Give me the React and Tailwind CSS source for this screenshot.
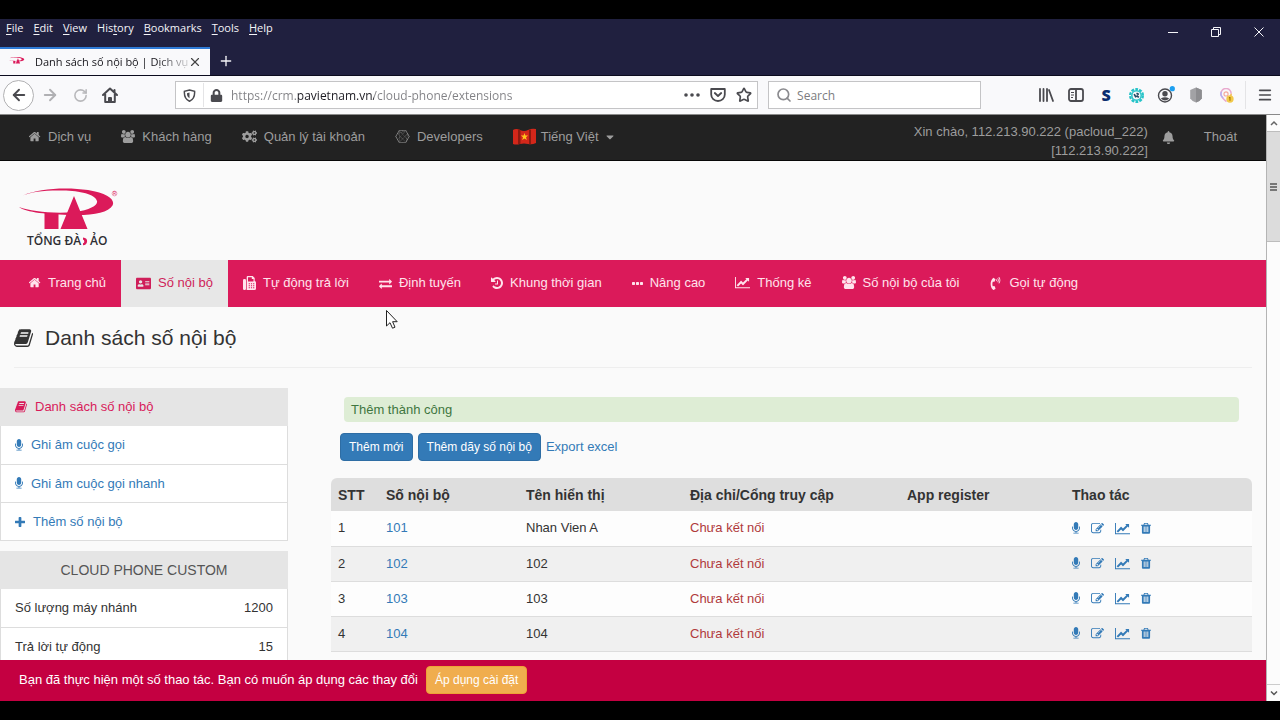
import { FaAddressCard, FaBell, FaCaretDown, FaCogs, FaConnectdevelop, FaLock, FaPhoneVolume } from "react-icons/fa";
import { ArrowLeft, ArrowRight, Menu, Plus, RotateCw, Search, Star, X } from "lucide-react";

const glyphs = {
  home: {
    box: "64 128 1664 1536",
    w: "w-3",
    d: "M1408 992v480q0 26-19 45t-45 19h-384v-384h-256v384h-384q-26 0-45-19t-19-45v-480q0-1 .5-3t.5-3l575-474 575 474q1 2 1 6zm223-69l-62 74q-8 9-21 11h-3q-13 0-21-7l-692-577-692 577q-12 8-24 7-13-2-21-11l-62-74q-8-10-7-23.5t11-21.5l719-599q32-26 76-26t76 26l244 204v-195q0-14 9-23t23-9h192q14 0 23 9t9 23v408l219 182q10 8 11 21.5t-7 23.5z",
  },
  users: {
    box: "0 0 1920 1792",
    w: "w-[14px]",
    d: "M593 896q-162 5-265 128h-134q-82 0-138-40.5t-56-118.5q0-353 124-353 6 0 43.5 21t97.5 42.5 119 21.5q67 0 133-23-5 37-5 66 0 139 81 256zm1071 637q0 120-73 189.5t-194 69.5h-874q-121 0-194-69.5t-73-189.5q0-53 3.5-103.5t14-109 26.5-108.5 43-97.5 62-81 85.5-53.5 111.5-20q10 0 43 21.5t73 48 107 48 135 21.5 135-21.5 107-48 73-48 43-21.5q61 0 111.5 20t85.5 53.5 62 81 43 97.5 26.5 108.5 14 109 3.5 103.5zm-1024-1277q0 106-75 181t-181 75-181-75-75-181 75-181 181-75 181 75 75 181zm704 384q0 159-112.5 271.5t-271.5 112.5-271.5-112.5-112.5-271.5 112.5-271.5 271.5-112.5 271.5 112.5 112.5 271.5zm576 225q0 78-56 118.5t-138 40.5h-134q-103-123-265-128 81-117 81-256 0-29-5-66 66 23 133 23 59 0 119-21.5t97.5-42.5 43.5-21q124 0 124 353zm-128-609q0 106-75 181t-181 75-181-75-75-181 75-181 181-75 181 75 75 181z",
  },
  microphone: {
    box: "320 0 1152 1792",
    w: "w-2",
    d: "M1472 704v128q0 221-147.5 384.5t-364.5 187.5v132h256q26 0 45 19t19 45-19 45-45 19h-640q-26 0-45-19t-19-45 19-45 45-19h256v-132q-217-24-364.5-187.5t-147.5-384.5v-128q0-26 19-45t45-19 45 19 19 45v128q0 185 131.5 316.5t316.5 131.5 316.5-131.5 131.5-316.5v-128q0-26 19-45t45-19 45 19 19 45zm-256-384v512q0 132-94 226t-226 94-226-94-94-226v-512q0-132 94-226t226-94 226 94 94 226z",
  },
  edit: {
    box: "0 0 1792 1792",
    w: "w-[13px]",
    d: "M888 1184l116-116-152-152-116 116v56h96v96h56zm440-720q-16-16-33 1l-350 350q-17 17-1 33t33-1l350-350q17-17 1-33zm80 594v190q0 119-84.5 203.5t-203.5 84.5h-832q-119 0-203.5-84.5t-84.5-203.5v-832q0-119 84.5-203.5t203.5-84.5h832q63 0 117 25 15 7 18 23 3 17-9 29l-49 49q-14 14-32 8-23-6-45-6h-832q-66 0-113 47t-47 113v832q0 66 47 113t113 47h832q66 0 113-47t47-113v-126q0-13 9-22l64-64q15-15 35-7t20 29zm-96-738l288 288-672 672h-288v-288zm444 132l-92 92-288-288 92-92q28-28 68-28t68 28l152 152q28 28 28 68t-28 68z",
  },
  chart: {
    box: "0 0 2048 1792",
    w: "w-[15px]",
    d: "M2048 1536v128h-2048v-1536h128v1408h1920zm-128-1248v435q0 21-19.5 29.5t-35.5-7.5l-121-121-633 633q-10 10-23 10t-23-10l-233-233-416 416-192-192 585-585q10-10 23-10t23 10l233 233 464-464-121-121q-16-16-7.5-35.5t29.5-19.5h435q14 0 23 9t9 23z",
  },
  trash: {
    box: "192 0 1408 1792",
    w: "w-[10px]",
    d: "M704 1376v-704q0-14-9-23t-23-9h-64q-14 0-23 9t-9 23v704q0 14 9 23t23 9h64q14 0 23-9t9-23zm256 0v-704q0-14-9-23t-23-9h-64q-14 0-23 9t-9 23v704q0 14 9 23t23 9h64q14 0 23-9t9-23zm256 0v-704q0-14-9-23t-23-9h-64q-14 0-23 9t-9 23v704q0 14 9 23t23 9h64q14 0 23-9t9-23zm-544-992h448l-48-117q-7-9-17-11h-317q-10 2-17 11zm928 32v64q0 14-9 23t-23 9h-96v948q0 83-47 143.5t-113 60.5h-832q-66 0-113-58.5t-47-141.5v-952h-96q-14 0-23-9t-9-23v-64q0-14 9-23t23-9h309l70-167q15-37 54-63t79-26h320q40 0 79 26t54 63l70 167h309q14 0 23 9t9 23z",
  },
  exchange: {
    box: "0 0 1792 1792",
    w: "w-[13px]",
    d: "M1792 1184v192q0 13-9.5 22.5t-22.5 9.5h-1376v192q0 13-9.5 22.5t-22.5 9.5q-12 0-24-10l-319-320q-9-9-9-22 0-14 9-23l320-320q9-9 23-9 13 0 22.5 9.5t9.5 22.5v192h1376q13 0 22.5 9.5t9.5 22.5zm0-544q0 14-9 23l-320 320q-9 9-23 9-13 0-22.5-9.5t-9.5-22.5v-192h-1376q-13 0-22.5-9.5t-9.5-22.5v-192q0-13 9.5-22.5t22.5-9.5h1376v-192q0-14 9-23t23-9q12 0 24 10l319 319q9 9 9 23z",
  },
  history: {
    box: "128 0 1536 1792",
    w: "w-3",
    d: "M1664 896q0 156-61 298t-164 245-245 164-298 61q-172 0-327-72.5t-264-204.5q-7-10-6.5-22.5t8.5-20.5l137-138q10-9 25-9 16 2 23 12 73 95 179 147t225 52q104 0 198.5-40.5t163.5-109.5 109.5-163.5 40.5-198.5-40.5-198.5-109.5-163.5-163.5-109.5-198.5-40.5q-98 0-188 35.5t-160 101.5l137 138q31 30 14 69-17 40-59 40h-448q-26 0-45-19t-19-45v-448q0-42 40-59 39-17 69 14l130 129q107-101 244.5-156.5t284.5-55.5q156 0 298 61t245 164 164 245 61 298zm-640-288v448q0 14-9 23t-23 9h-320q-14 0-23-9t-9-23v-64q0-14 9-23t23-9h224v-352q0-14 9-23t23-9h64q14 0 23 9t9 23z",
  },
  plus: {
    box: "192 128 1408 1408",
    w: "w-[10px]",
    d: "M1600 736v192q0 40-28 68t-68 28h-416v416q0 40-28 68t-68 28h-192q-40 0-68-28t-28-68v-416h-416q-40 0-68-28t-28-68v-192q0-40 28-68t68-28h416v-416q0-40 28-68t68-28h192q40 0 68 28t28 68v416h416q40 0 68 28t28 68z",
  },
  ellipsis: {
    box: "192 0 1408 1664",
    w: "w-[11px]",
    d: "M576 736v192q0 40-28 68t-68 28h-192q-40 0-68-28t-28-68v-192q0-40 28-68t68-28h192q40 0 68 28t28 68zm512 0v192q0 40-28 68t-68 28h-192q-40 0-68-28t-28-68v-192q0-40 28-68t68-28h192q40 0 68 28t28 68zm512 0v192q0 40-28 68t-68 28h-192q-40 0-68-28t-28-68v-192q0-40 28-68t68-28h192q40 0 68 28t28 68z",
  },
  book: {
    box: "64 96 1664 1600",
    w: "w-3",
    d: "M1703 478q40 57 18 129l-275 906q-19 64-76.5 107.5t-122.5 43.5h-923q-77 0-148.5-53.5t-99.5-131.5q-24-67-2-127 0-4 3-27t4-37q1-8-3-21.5t-3-19.5q2-11 8-21t16.5-23.5 16.5-23.5q23-38 45-91.5t30-91.5q3-10 .5-30t-.5-28q3-11 17-28t17-23q21-36 42-92t25-90q1-9-2.5-32t.5-28q4-13 22-30.5t22-22.5q19-26 42.5-84.5t27.5-96.5q1-8-3-25.5t-2-26.5q2-8 9-18t18-23 17-21q8-12 16.5-30.5t15-35 16-36 19.5-32 26.5-23.5 36-11.5 47.5 5.5l-1 3q38-9 51-9h761q74 0 114 56t18 130l-274 906q-36 119-71.5 153.5t-128.5 34.5h-869q-27 0-38 15-11 16-1 43 24 70 144 70h923q29 0 56-15.5t35-41.5l300-987q7-22 5-57 38 15 59 43zm-1064 2q-4 13 2 22.5t20 9.5h608q13 0 25.5-9.5t16.5-22.5l21-64q4-13-2-22.5t-20-9.5h-608q-13 0-25.5 9.5t-16.5 22.5zm-83 256q-4 13 2 22.5t20 9.5h608q13 0 25.5-9.5t16.5-22.5l21-64q4-13-2-22.5t-20-9.5h-608q-13 0-25.5 9.5t-16.5 22.5z",
  },
};

const Glyph = ({ name, className }) => {
  const { box, w, d } = glyphs[name];
  return (
    <svg viewBox={box} className={`shrink-0 ${className || w}`} fill="currentColor" aria-hidden="true">
      <path d={d} />
    </svg>
  );
};

const Fax = () => (
  <svg viewBox="0 0 13 14" className="w-[13px] shrink-0" fill="currentColor" aria-hidden="true">
    <rect x="0" y="3" width="3" height="11" rx="1.2" />
    <path
      fillRule="evenodd"
      d="M3.700 1q0-1 1-1h5l2 2v3q1.300.4 1.300 1.700v5.800q0 1.500-1.500 1.500h-7.800zM5 1.200v4.300h5.500v-2.500h-1.700v-1.800zM5.700 7.200v1h1.200v-1zM7.900 7.200v1h1.200v-1zM10.100 7.200v1h1.200v-1zM5.700 9.200v1h1.200v-1zM7.900 9.200v1h1.200v-1zM10.100 9.200v1h1.200v-1zM5.700 11.200v1h1.200v-1zM7.900 11.200v1h1.200v-1zM10.100 11.200v1h1.200v-1z"
    />
  </svg>
);

const menus = ["File", "Edit", "View", "History", "Bookmarks", "Tools", "Help"];

const topLinks = [
  { label: "Dịch vụ", icon: <Glyph name="home" /> },
  { label: "Khách hàng", icon: <Glyph name="users" /> },
  { label: "Quản lý tài khoản", icon: <FaCogs size={15} /> },
  { label: "Developers", icon: <FaConnectdevelop size={15} /> },
];

const navLinks = [
  { label: "Trang chủ", icon: <Glyph name="home" /> },
  { label: "Số nội bộ", icon: <FaAddressCard size={15} />, active: true },
  { label: "Tự động trả lời", icon: <Fax /> },
  { label: "Định tuyến", icon: <Glyph name="exchange" /> },
  { label: "Khung thời gian", icon: <Glyph name="history" /> },
  { label: "Nâng cao", icon: <Glyph name="ellipsis" /> },
  { label: "Thống kê", icon: <Glyph name="chart" /> },
  { label: "Số nội bộ của tôi", icon: <Glyph name="users" /> },
  { label: "Gọi tự động", icon: <FaPhoneVolume size={13} /> },
];

const sideLinks = [
  { label: "Ghi âm cuộc gọi", icon: "microphone" },
  { label: "Ghi âm cuộc gọi nhanh", icon: "microphone" },
  { label: "Thêm số nội bộ", icon: "plus" },
];

const quotas = [
  { label: "Số lượng máy nhánh", value: 1200 },
  { label: "Trả lời tự động", value: 15 },
];

const extensions = [
  { number: "101", name: "Nhan Vien A" },
  { number: "102", name: "102" },
  { number: "103", name: "103" },
  { number: "104", name: "104" },
];

const actions = [
  { icon: "microphone", label: "Ghi âm" },
  { icon: "edit", label: "Sửa" },
  { icon: "chart", label: "Thống kê" },
  { icon: "trash", label: "Xóa" },
];

const TitleBar = () => (
  <header className="flex justify-between border-b border-[#0b0b1e] bg-[#20203f] text-[#f4f4f8]">
    <div>
      <nav className="flex h-7 items-start gap-[10px] px-[6px] pt-px text-[11px] leading-4">
        {menus.map((menu) => {
          const at = menu === "History" ? 3 : 0;
          return (
            <button key={menu}>
              {menu.slice(0, at)}
              <u className="underline-offset-2">{menu[at]}</u>
              {menu.slice(at + 1)}
            </button>
          );
        })}
      </nav>
      <div className="flex h-7 items-center">
        <div className="flex h-full w-[210px] items-center border-t-2 border-[#2f7bd6] bg-[#f9f9fb] pr-2 pl-[9px] text-[#15141a]">
          <svg viewBox="0 0 100 60" className="mr-[10px] w-4 shrink-0" aria-hidden="true">
            <LogoMark />
          </svg>
          <span className="flex-1 bg-linear-to-r from-[#15141a] from-80% to-[#15141a30] bg-clip-text text-[11px] leading-4 whitespace-nowrap text-transparent">
            Danh sách số nội bộ | Dịch vụ
          </span>
          <button aria-label="Close tab">
            <X size={14} strokeWidth={2} color="#444" />
          </button>
        </div>
        <button className="px-2" aria-label="New tab">
          <Plus size={16} strokeWidth={2} />
        </button>
      </div>
    </div>
    <div className="flex h-[26px]">
      <button className="flex w-[43px] items-center justify-center" aria-label="Minimize">
        <svg viewBox="0 0 10 10" className="w-[10px]" stroke="currentColor"><path d="M0 5.500h10" /></svg>
      </button>
      <button className="flex w-[43px] items-center justify-center" aria-label="Restore">
        <svg viewBox="0 0 10 10" className="w-[10px]" stroke="currentColor" fill="none">
          <path d="M.5 2.500h7v7h-7zM2.500 2.500v-2h7v7h-2" />
        </svg>
      </button>
      <button className="flex w-[43px] items-center justify-center" aria-label="Close">
        <svg viewBox="0 0 10 10" className="w-[10px]" stroke="currentColor"><path d="M.5.5l9 9M9.500.5l-9 9" /></svg>
      </button>
    </div>
  </header>
);

const ToolButton = ({ label, children }) => (
  <button className="flex h-[30px] w-[30px] shrink-0 items-center justify-center" aria-label={label}>
    {children}
  </button>
);

const Toolbar = () => (
  <div className="flex h-[39px] shrink-0 items-center border-b border-[#8a8a8a] bg-[#f9f9fb] pl-[3px] text-[#4a4a4f]">
    <button
      className="mr-px flex h-[31px] w-[31px] shrink-0 items-center justify-center rounded-full border border-[#b1b1b3] bg-white"
      aria-label="Back"
    >
      <ArrowLeft size={18} strokeWidth={2.5} />
    </button>
    <ToolButton label="Forward"><ArrowRight size={18} strokeWidth={2.5} color="#b0b0b3" /></ToolButton>
    <ToolButton label="Reload"><RotateCw size={15} strokeWidth={2.5} color="#b8b8bb" /></ToolButton>
    <ToolButton label="Home">
      <svg viewBox="0 0 16 16" className="w-4" fill="none" stroke="currentColor" strokeWidth="2" strokeLinejoin="round" strokeLinecap="round">
        <path d="M1 8l7-6.500 7 6.500M3.200 7v8h9.600v-8M7 15v-4h2v4M12.500 3v2" />
      </svg>
    </ToolButton>
    <div className="ml-[50px] flex h-7 min-w-0 flex-[590] items-center border border-[#c4c4c6] bg-white">
      <span className="flex h-6 w-7 shrink-0 items-center justify-center border-r border-[#e4e4e6]">
        <svg viewBox="0 0 14 14" className="w-[13px]" fill="none" stroke="currentColor" strokeWidth="1.600">
          <path d="M7 1l5.500 1.500q.5 8-5.500 10.700q-6-2.700-5.500-10.700z" />
          <path d="M7 3.800v6.200q-3-2-2.700-5.500z" fill="currentColor" stroke="none" />
        </svg>
      </span>
      <span className="flex w-6 shrink-0 justify-center"><FaLock size={13} /></span>
      <input
        aria-label="Address"
        className="ml-[3px] min-w-0 flex-1 bg-[linear-gradient(90deg,#808084_66px,#1c1b22_66px,#1c1b22_143px,#808084_143px)] bg-clip-text pt-[2px] text-xs leading-5 text-transparent outline-none"
        defaultValue="https://crm.pavietnam.vn/cloud-phone/extensions"
      />
      <button className="flex w-[26px] justify-center" aria-label="Page actions">
        <svg viewBox="0 0 16 4" className="w-4" fill="currentColor">
          <circle cx="2" cy="2" r="1.800" /><circle cx="8" cy="2" r="1.800" /><circle cx="14" cy="2" r="1.800" />
        </svg>
      </button>
      <button className="flex w-[26px] justify-center" aria-label="Save to Pocket">
        <svg viewBox="0 0 16 14" className="w-4" fill="none" stroke="currentColor" strokeWidth="1.800" strokeLinecap="round" strokeLinejoin="round">
          <path d="M1.200 1h13.600v5.500a6.800 6.500 0 0 1-13.600 0zM4.800 5l3.200 3 3.200-3" />
        </svg>
      </button>
      <button className="flex w-[26px] justify-center" aria-label="Bookmark this page"><Star size={16} strokeWidth={2.5} /></button>
    </div>
    <label className="ml-[10px] flex h-7 min-w-0 flex-[207] items-center border border-[#c4c4c6] bg-white pl-[7px]">
      <Search size={16} strokeWidth={2.5} color="#8a8a8e" className="shrink-0" />
      <input
        aria-label="Search"
        placeholder="Search"
        className="ml-[5px] min-w-0 flex-1 pt-[2px] text-xs leading-5 outline-none placeholder:text-[#7c7c80]"
      />
    </label>
    <div className="ml-[50px] flex shrink-0 items-center">
      <ToolButton label="Library">
        <svg viewBox="0 0 16 14" className="w-4" fill="none" stroke="currentColor" strokeWidth="1.800" strokeLinecap="round">
          <path d="M2 1v12M5.500 1v12M9 1v12M11 2l4 11" />
        </svg>
      </ToolButton>
      <ToolButton label="Sidebars">
        <svg viewBox="0 0 16 14" className="w-4" fill="none" stroke="currentColor" strokeWidth="1.800">
          <rect x="1" y="1" width="14" height="12" rx="2" />
          <path d="M8 1v12" />
          <path d="M3 4.500h3M3 7h3M3 9.500h2" strokeWidth="1" />
        </svg>
      </ToolButton>
      <ToolButton label="Extension S"><span className="text-base leading-5 font-extrabold text-[#0b2d6e]">S</span></ToolButton>
      <ToolButton label="Settings extension">
        <svg viewBox="0 0 16 16" className="w-[15px]" fill="none">
          <circle cx="8" cy="8" r="6.800" stroke="#25c3c8" strokeWidth="2.400" strokeDasharray="3 1.270" />
          <circle cx="8" cy="8" r="5" stroke="#25c3c8" strokeWidth="1.600" />
          <path d="M5.500 6.500l2 3.500M8 5.500l2.500 1.500M8 8l2.500 2" stroke="#234a63" strokeWidth="1.800" />
        </svg>
      </ToolButton>
      <ToolButton label="Account">
        <svg viewBox="0 0 18 18" className="w-[18px]" fill="none">
          <circle cx="8" cy="9.500" r="6.500" stroke="#4a4a4f" strokeWidth="1.400" />
          <circle cx="8" cy="7.800" r="2.700" fill="#4a4a4f" />
          <path d="M3.800 12.500q4.200-2.500 8.400 0q-4.200 4-8.400 0z" fill="#4a4a4f" />
          <circle cx="15.300" cy="2.700" r="2.600" fill="#1ea0f0" />
        </svg>
      </ToolButton>
      <ToolButton label="Shield">
        <svg viewBox="0 0 12 16" className="w-3">
          <path d="M6 .5l5.800 2.500v8.500q-2 3-5.800 4q-3.800-1-5.800-4v-8.500z" fill="#a2a2a5" />
          <path d="M6 .5l5.800 2.500v8.500q-2 3-5.800 4z" fill="#8d8d90" />
        </svg>
      </ToolButton>
      <ToolButton label="Location guard">
        <svg viewBox="0 0 16 16" className="w-[15px]" fill="none">
          <path d="M8 14.500q-6-5-6-8.500a5.500 5.500 0 0 1 11 0" stroke="#e9a9ce" strokeWidth="1.600" />
          <path d="M13 6q0 2-1.500 4" stroke="#f4b44c" strokeWidth="1.600" />
          <path d="M2.500 4a5.500 5.500 0 0 0 2 6.500" stroke="#b5b1f2" strokeWidth="1.500" />
          <circle cx="7.500" cy="6.300" r="2.200" stroke="#f4a99c" strokeWidth="1.200" />
          <circle cx="11.700" cy="11.700" r="3.900" fill="#f2c94a" />
          <path d="M11.700 9.500v4.200M10.600 10.300h1.100" stroke="#a87800" strokeWidth="1.200" />
        </svg>
      </ToolButton>
      <div className="mx-1 h-7 w-px bg-[#e4e4e6]" />
      <ToolButton label="Open menu"><Menu size={16} strokeWidth={2.5} /></ToolButton>
    </div>
  </div>
);

const LogoMark = () => (
  <g fill="#db1a5a">
    <path d="M5 7.500C20 0 50-1 70 2c20 3.200 27.500 10 24.500 15.500-4 7-19.500 10-39.500 9.500-25-.5-47-2.500-54-8 11 4 34 7 55 5 17-2 24-7 23-11-2-7-17-10-34-10.500-17-.5-33 1.500-40 5z" />
    <path d="M26.500 25h14v16h-14zM56 8l13.500 33h-27z" />
    <path d="M41 27.500h2.500l2 1-4.500 9z" fill="#fafafa" />
  </g>
);

const Logo = () => (
  <svg viewBox="0 0 100 60" className="w-[100px]" role="img" aria-label="Tổng đài ảo">
    <LogoMark />
    <circle cx="96.500" cy="5.500" r="2.400" fill="none" stroke="#e0658d" strokeWidth="0.600" />
    <text x="95" y="7.200" fontSize="5" fill="#db1a5a">R</text>
    <text x="9" y="57" fontSize="12" fontWeight="600" fill="#2e2e33">TỔNG ĐÀ</text>
    <path d="M65 49.500q4.500.5 4.100 4t-4.100 3.800v-2q1.300-.2 1.300-1.800t-1.300-1.900z" fill="#db1a5a" />
    <text x="72" y="57" fontSize="12" fontWeight="600" fill="#2e2e33">ẢO</text>
  </svg>
);

const Flag = () => (
  <svg viewBox="0 0 23 17" className="w-[23px]" aria-hidden="true">
    <path d="M0 2q3-2 7 0t8 0 8-1v14q-4 2-8 1t-8 0-7 0z" fill="#d3271a" />
    <path d="M5 1.200q2 0 2.500 1v13.500l-2.500.5zM16 2l2-.5v14.700l-2-.2z" fill="#8e1a10" />
    <path d="M11.500 5l.9 2.600h2.700l-2.100 1.700.8 2.700-2.300-1.600-2.300 1.600.8-2.700-2.100-1.700h2.700z" fill="#ffc51c" />
  </svg>
);

const TopNav = () => (
  <nav className="flex h-[46px] shrink-0 items-center justify-between border-b border-[#080808] bg-[#222] pr-[29px] pl-[14px] text-[#9d9d9d]">
    <div className="flex items-center pb-[2px]">
      {topLinks.map(({ label, icon }) => (
        <a key={label} href="#" className="flex items-center gap-[7px] px-[15px]">
          {icon}
          {label}
        </a>
      ))}
      <a href="#" className="flex items-center gap-[5px] px-[15px]">
        <Flag />
        Tiếng Việt
        <FaCaretDown size={12} />
      </a>
    </div>
    <div className="flex items-center">
      <p className="mt-[7px] text-right leading-[19px]">
        Xin chào, 112.213.90.222 (pacloud_222)
        <br />
        [112.213.90.222]
      </p>
      <a href="#" aria-label="Thông báo" className="px-[14px]"><FaBell size={13} /></a>
      <a href="#" className="pb-[2px] pl-[15px]">Thoát</a>
    </div>
  </nav>
);

const MainNav = () => (
  <nav className="flex h-[47px] shrink-0 bg-[#db1a5a] pl-[14px] text-[#ffe3ec]">
    {navLinks.map(({ label, icon, active }) => (
      <a
        key={label}
        href="#"
        className={`flex items-center gap-[7px] px-[15px] pb-px ${active ? "bg-[#e7e7e7] text-[#cf1f5a]" : ""}`}
      >
        {icon}
        {label}
      </a>
    ))}
  </nav>
);

const Sidebar = () => (
  <aside className="w-[288px] shrink-0">
    <ul className="border-b border-[#ddd]">
      <li>
        <a href="#" className="flex h-[38px] items-center gap-2 bg-[#e5e5e5] px-[15px] text-[#d81b5a]">
          <Glyph name="book" />
          Danh sách số nội bộ
        </a>
      </li>
      {sideLinks.map(({ label, icon }, i) => (
        <li key={label} className={`h-[38px] border-x border-[#ddd] bg-white ${i ? "border-t" : ""}`}>
          <a href="#" className="flex h-full items-center gap-2 px-[14px] text-[#337ab7]">
            <Glyph name={icon} />
            {label}
          </a>
        </li>
      ))}
    </ul>
    <h2 className="mt-[10px] flex h-[38px] items-center justify-center bg-[#e5e5e5] text-sm text-[#555]">CLOUD PHONE CUSTOM</h2>
    <dl>
      {quotas.map(({ label, value }) => (
        <div key={label} className="flex h-[39px] items-center justify-between border border-t-0 border-[#ddd] bg-white px-[14px]">
          <dt>{label}</dt>
          <dd>{value}</dd>
        </div>
      ))}
    </dl>
  </aside>
);

const ExtensionTable = () => (
  <table className="mt-[17px] w-full table-fixed text-left">
    <thead>
      <tr className="h-[33px] text-sm [&>th]:bg-[#dedede] [&>th]:px-[7px]">
        <th className="w-12 rounded-tl-md">STT</th>
        <th className="w-[140px]">Số nội bộ</th>
        <th className="w-[164px]">Tên hiển thị</th>
        <th className="w-[217px]">Địa chỉ/Cổng truy cập</th>
        <th className="w-[165px]">App register</th>
        <th className="rounded-tr-md">Thao tác</th>
      </tr>
    </thead>
    <tbody>
      {extensions.map(({ number, name }, i) => (
        <tr key={number} className="h-[35px] border-b border-[#ddd] odd:bg-[#fdfdfd] even:bg-[#f0f0f0] [&>td]:px-[7px]">
          <td>{i + 1}</td>
          <td><a href="#" className="text-[#337ab7]">{number}</a></td>
          <td>{name}</td>
          <td className="text-[#b03a3c]">Chưa kết nối</td>
          <td />
          <td>
            <div className="flex items-center gap-[11px] text-[#337ab7]">
              {actions.map(({ icon, label }) => (
                <a key={icon} href="#" aria-label={label}><Glyph name={icon} /></a>
              ))}
            </div>
          </td>
        </tr>
      ))}
    </tbody>
  </table>
);

const ScrollBar = () => (
  <div className="flex w-[14px] shrink-0 flex-col border-l border-[#b4b4b4] bg-[#fcfcfc]" aria-hidden="true">
    <svg viewBox="0 0 14 16" className="w-[14px]" fill="none" stroke="#666" strokeWidth="1.500"><path d="M4 10l3-3 3 3" /></svg>
    <div className="flex h-[111px] items-center justify-center border-y border-[#bdbdbd] bg-[#dcdcdc]">
      <svg viewBox="0 0 7 8" className="w-[7px]" stroke="#555" strokeWidth="1.500"><path d="M0 1h7M0 4h7M0 7h7" /></svg>
    </div>
    <svg viewBox="0 0 14 16" className="mt-auto w-[14px] border-t border-[#ccc]" fill="none" stroke="#555" strokeWidth="1.500"><path d="M4 6.500l3 3 3-3" /></svg>
  </div>
);

export default function App() {
  return (
    <div className="flex h-screen flex-col overflow-hidden border-y-[19px] border-black bg-[#fafafa] font-['Open_Sans','Noto_Sans',sans-serif]">
      <TitleBar />
      <Toolbar />
      <div className="flex min-h-0 flex-1 font-['Liberation_Sans',Arial,sans-serif] text-[13px] leading-5 text-[#333]">
        <div className="relative flex min-w-0 flex-1 flex-col">
          <TopNav />
          <div className="flex min-h-0 flex-1 flex-col overflow-hidden">
            <div className="shrink-0 px-[18px] pt-[27px] pb-3 font-['Open_Sans',sans-serif]">
              <a href="#" className="block w-[100px]"><Logo /></a>
            </div>
            <MainNav />
            <h1 className="mx-[14px] flex h-[61px] shrink-0 items-center gap-3 border-b border-[#eee] pt-[2px] text-[21px] leading-7">
              <Glyph name="book" className="w-[19px]" />
              Danh sách số nội bộ
            </h1>
            <div className="mt-5 flex items-start pr-[14px]">
              <Sidebar />
              <main className="ml-[43px] min-w-0 flex-1 pt-[9px]">
                <p role="status" className="mx-[13px] rounded bg-[#deedd5] px-[7px] py-[3px] leading-[19px] text-[#3f763f]">
                  Thêm thành công
                </p>
                <div className="mt-[11px] ml-[9px] flex items-center gap-[5px]">
                  <button className="h-7 rounded-sm border border-[#2e6da4] bg-[#337ab7] px-2 text-xs text-white">Thêm mới</button>
                  <button className="h-7 rounded-sm border border-[#2e6da4] bg-[#337ab7] px-2 text-xs text-white">Thêm dãy số nội bộ</button>
                  <a href="#" className="text-[#337ab7]">Export excel</a>
                </div>
                <ExtensionTable />
              </main>
            </div>
          </div>
          <footer className="absolute inset-x-0 bottom-0 flex h-[41px] items-center gap-2 bg-[#c40041] pb-[2px] pl-[19px] text-white">
            Bạn đã thực hiện một số thao tác. Bạn có muốn áp dụng các thay đổi
            <button className="h-7 rounded-sm border border-[#eea236] bg-[#f0ad4e] px-2 text-xs">Áp dụng cài đặt</button>
          </footer>
          <svg viewBox="0 0 12 19" className="absolute top-[195px] left-[386px] w-3" aria-hidden="true">
            <path d="M.5.5v15.500l3.500-3.300 2.500 5.500 2.500-1-2.400-5.500h4.600z" fill="#fff" stroke="#222" />
          </svg>
        </div>
        <ScrollBar />
      </div>
    </div>
  );
}
